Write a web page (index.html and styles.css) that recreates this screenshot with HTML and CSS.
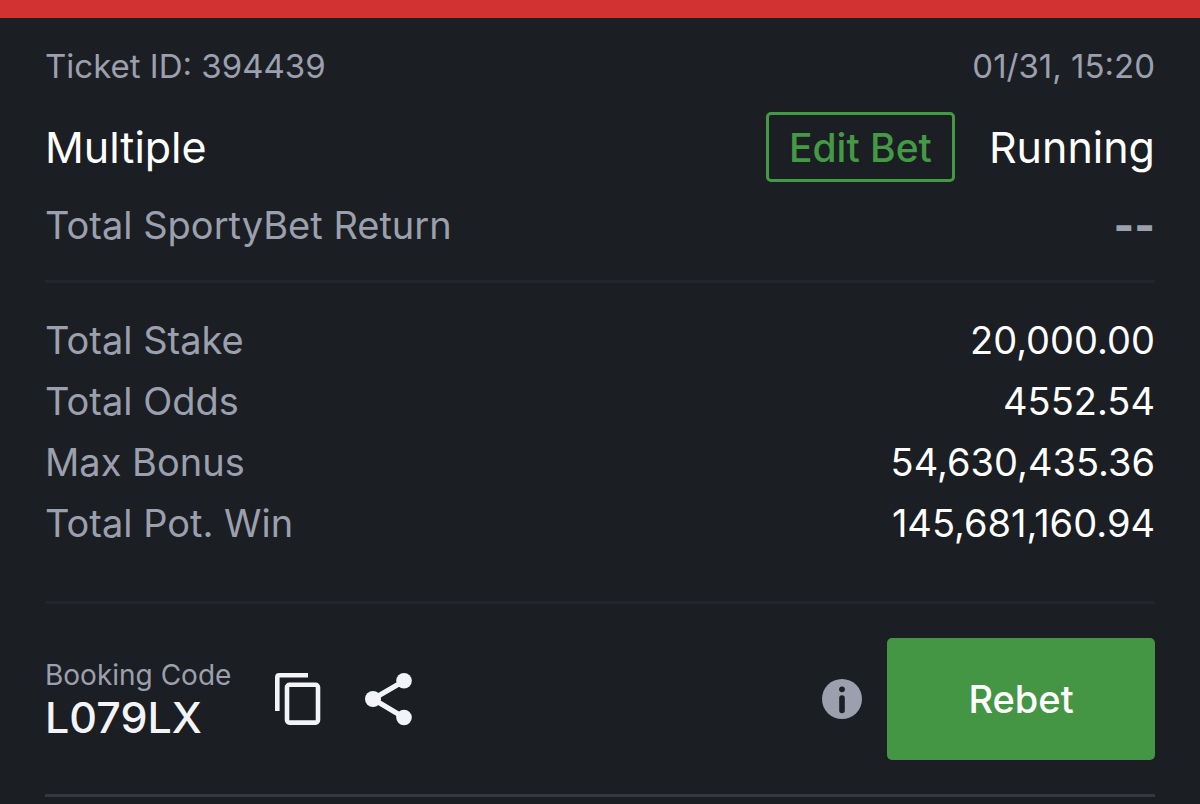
FILE: index.html
```
<!DOCTYPE html>
<html lang="en">
    <head>
        <meta charset="utf-8">
        <meta name="viewport" content="width=device-width, initial-scale=1">
        <title>Ticket 394439</title>
        <link rel="stylesheet" href="styles.css">
    </head>
    <body>
        <header class="topbar"></header>
        <main class="ticket">
            <section class="summary">
                <div class="row meta">
                    <span>Ticket ID: 394439</span>
                    <span>01/31, 15:20</span>
                </div>
                <div class="row status">
                    <h1 class="title">Multiple</h1>
                    <div class="state">
                        <button class="edit" type="button">Edit Bet</button>
                        <span>Running</span>
                    </div>
                </div>
                <div class="row return">
                    <span>Total SportyBet Return</span>
                    <span class="dashes">--</span>
                </div>
            </section>

            <dl class="totals">
                <div class="row"><dt>Total Stake</dt><dd>20,000.00</dd></div>
                <div class="row"><dt>Total Odds</dt><dd>4552.54</dd></div>
                <div class="row"><dt>Max Bonus</dt><dd>54,630,435.36</dd></div>
                <div class="row"><dt>Total Pot. Win</dt><dd>145,681,160.94</dd></div>
            </dl>

            <footer class="booking">
                <div class="code">
                    <span class="code-label">Booking Code</span>
                    <span class="code-value">L079LX</span>
                </div>
                <button class="icon copy" type="button" aria-label="Copy booking code">
                    <svg width="46" height="52" viewBox="0 0 46 52" fill="none" stroke="#f3f4f7" stroke-width="4.6">
                        <path d="M2.3 38V4.3Q2.3 2.3 4.3 2.3H33"/>
                        <rect x="12" y="11.8" width="31" height="37.8" rx="2.5"/>
                    </svg>
                </button>
                <button class="icon share" type="button" aria-label="Share">
                    <svg width="48" height="54" viewBox="0 0 48 54" fill="#f3f4f7">
                        <path d="M8 27L39 9M8 27L39 45.5" stroke="#f3f4f7" stroke-width="5"/>
                        <circle cx="8" cy="27" r="8"/>
                        <circle cx="39" cy="8.8" r="7.8"/>
                        <circle cx="39" cy="45.5" r="7.8"/>
                    </svg>
                </button>
                <button class="icon info" type="button" aria-label="Information">
                    <svg width="40" height="40" viewBox="0 0 40 40">
                        <circle cx="20" cy="20" r="20" fill="#9ca0ae"/>
                        <path d="M20 19V31.5" stroke="#1b1e23" stroke-width="5.6" stroke-linecap="round"/>
                        <circle cx="20" cy="10.3" r="2.9" fill="#1b1e23"/>
                    </svg>
                </button>
                <button class="rebet" type="button">Rebet</button>
            </footer>
        </main>
    </body>
</html>
```
FILE: styles.css
```
* {
    box-sizing: border-box;
}

body {
    margin: 0;
    background: #1b1e23;
    color: #fff;
    font-family: Inter, "Liberation Sans", sans-serif;
    font-size: 38px;
}

button {
    font-family: inherit;
    cursor: pointer;
}

.topbar {
    height: 18px;
    background: #d33232;
}

.ticket {
    padding: 0 45px;
}

.row {
    display: flex;
    align-items: center;
    justify-content: space-between;
}

.summary {
    padding: 26px 0 27px;
    border-bottom: 3px solid #22252b;
}

.meta {
    height: 44px;
    color: #9ca0ae;
    font-size: 33px;
}

.status {
    height: 70px;
    margin: 24px 0 15px;
    font-size: 43px;
}

.title {
    margin: 0;
    font-size: 43px;
    font-weight: 400;
}

.state {
    display: flex;
    align-items: center;
    gap: 34px;
}

.edit {
    height: 70px;
    padding: 0 20px;
    border: 3px solid #449944;
    border-radius: 5px;
    background: none;
    color: #449944;
    font-size: 39px;
    font-weight: 500;
}

.return {
    height: 56px;
    color: #9ca0ae;
}

.dashes {
    font-size: 44px;
    font-weight: 800;
}

.totals {
    margin: 0;
    padding: 26px 0 48px;
    border-bottom: 3px solid #22252b;
}

.totals .row {
    min-height: 61px;
}

.totals dt {
    color: #9ca0ae;
}

.totals dd {
    margin: 0;
}

.booking {
    display: flex;
    align-items: center;
    padding: 34px 0;
    border-bottom: 3px solid #343840;
}

.code {
    display: flex;
    flex-direction: column;
}

.code-label {
    color: #9ca0ae;
    font-size: 28px;
    line-height: 36px;
}

.code-value {
    color: #f3f4f7;
    font-size: 43px;
    line-height: 48px;
    font-weight: 500;
}

.icon {
    display: flex;
    padding: 0;
    border: 0;
    background: none;
}

.copy,
.share {
    margin-left: 44px;
}

.info {
    margin-left: auto;
}

.rebet {
    width: 268px;
    height: 122px;
    margin-left: 25px;
    border: 0;
    border-radius: 5px;
    background: #449644;
    color: #fff;
    font-size: 38px;
    font-weight: 500;
}
```
